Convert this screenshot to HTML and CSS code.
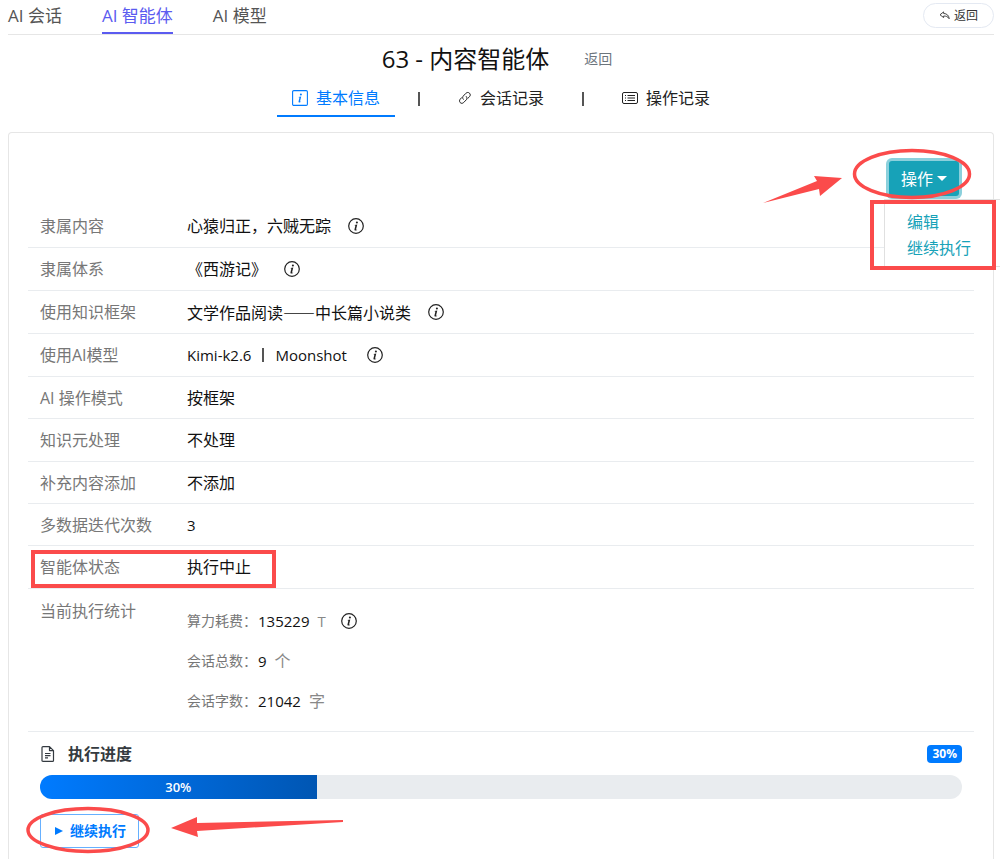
FILE: index.html
```html
<!DOCTYPE html>
<html lang="zh-CN">
<head>
<meta charset="utf-8">
<meta name="viewport" content="width=device-width, initial-scale=1">
<title>63 - 内容智能体</title>
<link rel="stylesheet" href="styles.css">
</head>
<body>
<svg class="sprite" aria-hidden="true">
  <symbol id="info" viewBox="0 0 16 16">
    <circle cx="8" cy="8" r="7.3" fill="none" stroke="currentColor" stroke-width="1.2"/>
    <circle cx="8.9" cy="4.5" r="1.05" fill="currentColor"/>
    <path d="M6.5 6.9 9.3 6.5 8.1 11.2c-.1.6.2.7.9.2l.2.3c-.6.6-1.2.9-1.8.9-.8 0-1.1-.5-.9-1.3l.8-3.3c.1-.5 0-.6-.9-.7z" fill="currentColor"/>
  </symbol>
</svg>
<div class="page">
  <header class="topbar">
    <nav class="tabs">
      <a class="tab" href="#">AI 会话</a>
      <a class="tab tab-active" href="#">AI 智能体</a>
      <a class="tab" href="#">AI 模型</a>
    </nav>
    <button class="back-pill" type="button">
      <svg class="back-icon" viewBox="0 0 12 10" fill="none" stroke="currentColor" stroke-width="1" stroke-linejoin="round"><path d="M5 1 1 4.2 5 7.3V5.6c2.600-.2 4.700.6 6.200 3C11 5.200 8.800 2.900 5 2.700z"/></svg>
      返回
    </button>
  </header>

  <div class="title-row">
    <h1 class="title">63 - 内容智能体</h1>
    <a class="title-back" href="#">返回</a>
  </div>

  <nav class="subtabs">
    <a class="subtab subtab-active" href="#">
      <svg class="icon" viewBox="0 0 16 16"><rect x=".6" y=".6" width="14.800" height="14.800" rx="1.200" fill="none" stroke="currentColor" stroke-width="1.100"/><circle cx="8.900" cy="4.500" r="1" fill="currentColor"/><path d="M6.500 6.900 9.200 6.600 8.100 11.300c-.1.500.2.600.9.200l.1.300c-.6.500-1.200.7-1.700.7-.7 0-1-.4-.8-1.200l.8-3.400c.1-.4 0-.5-.9-.6z" fill="currentColor"/></svg>
      基本信息
    </a>
    <span class="bar" aria-hidden="true"></span>
    <a class="subtab" href="#">
      <svg class="icon-link" viewBox="0 0 14 14" fill="none" stroke="currentColor" stroke-width="1" stroke-linecap="round"><path d="M5.300 8.300C4.300 7.200 4.500 5.900 5.300 5L7.900 2.300C9 1.200 10.500 1.200 11.500 2.200s1 2.500 0 3.500L9.900 7.300M8.300 5.500c1 1 .9 2.400 0 3.300l-2.600 2.700c-1.100 1.100-2.600 1.100-3.500.1s-.9-2.400 0-3.400l1.500-1.600"/></svg>
      会话记录
    </a>
    <span class="bar" aria-hidden="true"></span>
    <a class="subtab" href="#">
      <svg class="icon" viewBox="0 0 16 16" fill="none" stroke="currentColor" stroke-width="1"><rect x=".5" y="2.500" width="15" height="11" rx="1.500"/><path d="M5.500 5.500h7.500M5.500 8h7.500M5.500 10.500h7.500M3 5.500h1M3 8h1M3 10.500h1"/></svg>
      操作记录
    </a>
  </nav>

  <main class="card">
    <div class="actions">
      <div class="dropdown">
        <button class="dropdown-toggle" type="button" aria-expanded="true">操作<span class="caret"></span></button>
        <div class="dropdown-menu">
          <a class="dropdown-item" href="#">编辑</a>
          <a class="dropdown-item" href="#">继续执行</a>
        </div>
        <svg class="mark mark-menu" viewBox="0 0 240 130" aria-hidden="true">
          <ellipse cx="152" cy="28" rx="57.500" ry="23.500" fill="none" stroke="#fb4b4b" stroke-width="3.500"/>
          <path d="M3 57 57 35 54 30 82 32 60 50 59 43z" fill="#fb4b4b"/>
          <rect x="112" y="56" width="122" height="66" fill="none" stroke="#fb4b4b" stroke-width="4"/>
        </svg>
      </div>
    </div>

    <dl class="details">
      <div class="row row-info"><dt>隶属内容</dt><dd>心猿归正，六贼无踪<svg class="icon info"><use href="#info"/></svg></dd></div>
      <div class="row row-info"><dt>隶属体系</dt><dd>《西游记》<svg class="icon info"><use href="#info"/></svg></dd></div>
      <div class="row row-info"><dt>使用知识框架</dt><dd class="cjk">文学作品阅读——中长篇小说类<svg class="icon info"><use href="#info"/></svg></dd></div>
      <div class="row row-info"><dt>使用AI模型</dt><dd class="latin"><span>Kimi-k2.6</span><span class="bar bar-model"></span><span>Moonshot</span><svg class="icon info info-model"><use href="#info"/></svg></dd></div>
      <div class="row"><dt>AI 操作模式</dt><dd>按框架</dd></div>
      <div class="row row-info"><dt>知识元处理</dt><dd>不处理</dd></div>
      <div class="row"><dt>补充内容添加</dt><dd>不添加</dd></div>
      <div class="row"><dt>多数据迭代次数</dt><dd class="latin">3</dd></div>
      <div class="row row-info row-status"><dt>智能体状态</dt><dd>执行中止</dd></div>
      <div class="row row-stats"><dt>当前执行统计</dt>
        <dd class="stats">
          <div class="stat"><span class="stat-label">算力耗费：</span><span class="latin">135229</span><span class="unit latin">T</span><svg class="icon info-stat"><use href="#info"/></svg></div>
          <div class="stat"><span class="stat-label">会话总数：</span><span class="latin">9</span><span class="unit">个</span></div>
          <div class="stat"><span class="stat-label">会话字数：</span><span class="latin">21042</span><span class="unit">字</span></div>
        </dd>
      </div>
    </dl>

    <section class="progress">
      <div class="progress-head">
        <svg class="icon" viewBox="0 0 16 16" fill="none" stroke="#343a40" stroke-width="1.200" stroke-linejoin="round"><path d="M2 1.500Q2 .6 3 .6H9.500L13.500 4.600V14.500Q13.500 15.400 12.500 15.400H3Q2 15.400 2 14.500zM9.500.6V4.600h4M5 7.500h5.500M5 9.700h5.500M5 11.900h3"/></svg>
        <h2 class="progress-title">执行进度</h2>
        <span class="badge">30%</span>
      </div>
      <div class="track" role="progressbar" aria-label="执行进度" aria-valuenow="30" aria-valuemin="0" aria-valuemax="100">
        <div class="fill" style="width:30%">30%</div>
      </div>
      <div class="resume-wrap">
        <button class="resume" type="button"><svg class="play" viewBox="0 0 8 8"><path d="M0 0 8 4 0 8z" fill="currentColor"/></svg>继续执行</button>
        <svg class="mark mark-resume" viewBox="0 0 330 60" aria-hidden="true">
          <ellipse cx="68" cy="29" rx="60" ry="21.500" fill="none" stroke="#fb4b4b" stroke-width="3.500"/>
          <path d="M151 27 177 16V22L323 19V21L177 30 178 36z" fill="#fb4b4b"/>
        </svg>
      </div>
    </section>
  </main>
</div>
</body>
</html>
```
FILE: styles.css
```css
*, *::before, *::after { box-sizing: border-box; }
body {
  margin: 0;
  background: #fff;
  color: #111;
  font: 16px/24px "Open Sans", "Noto Sans CJK SC", sans-serif;
}
a { color: inherit; text-decoration: none; }
button { font: inherit; margin: 0; }
.sprite { position: absolute; width: 0; height: 0; }
.page {
  display: flex;
  flex-direction: column;
  min-height: 100vh;
  padding: 0 6px 0 8px;
  overflow-x: clip;
}

.topbar {
  display: flex;
  justify-content: space-between;
  align-items: flex-start;
  height: 35px;
  border-bottom: 1px solid #e6e6e6;
}
.tabs { display: flex; gap: 40px; }
.tab {
  height: 34px;
  line-height: 32px;
  font-size: 17px;
  color: #555;
}
.tab-active { color: #5b5bf0; border-bottom: 2px solid #5b5bf0; }
.back-pill {
  display: flex;
  align-items: center;
  gap: 4px;
  height: 25px;
  margin-top: 3px;
  padding: 0 15px;
  border: 1px solid #e4e9f2;
  border-radius: 13px;
  background: #fff;
  color: #333;
  font-size: 12px;
}
.back-icon { width: 11px; height: 9px; }

.title-row {
  display: flex;
  justify-content: center;
  align-items: center;
  gap: 35px;
  padding: 8px 8px 0 0;
}
.title { margin: 0; font-size: 24px; line-height: 32px; font-weight: 400; }
.title-back { font-size: 14px; color: #6c757d; }

.subtabs {
  display: flex;
  justify-content: center;
  align-items: center;
  gap: 23px;
  margin-top: 5px;
}
.subtab {
  display: flex;
  align-items: center;
  gap: 8px;
  height: 37px;
  padding: 0 15px;
  border-bottom: 2px solid transparent;
  color: #222;
}
.subtab-active { color: #007bff; border-color: #007bff; }
.icon { width: 16px; height: 16px; flex: none; }
.icon-link { width: 14px; height: 14px; flex: none; }
.bar { width: 2px; height: 14px; background: #555; }

.card {
  flex: 1;
  margin-top: 15px;
  padding: 0 19px 10px;
  border: 1px solid #e6e6e6;
  border-bottom: 0;
  border-radius: 4px 4px 0 0;
}
.actions { display: flex; justify-content: flex-end; padding: 28px 15px 0 0; }
.dropdown { position: relative; }
.dropdown-toggle {
  display: flex;
  align-items: center;
  gap: 4px;
  height: 35px;
  padding: 0 12px;
  border: 0;
  border-radius: 3px;
  background: #17a2b8;
  box-shadow: 0 0 0 3px #8bd0dc;
  color: #fff;
}
.caret { border: 5px solid transparent; border-top: 5px solid #fff; border-bottom: 0; }
.dropdown-menu {
  position: absolute;
  top: 38px;
  left: -5px;
  width: 160px;
  padding: 9px 22px 5px;
  border: 1px solid #e0e0e0;
  background: #fff;
  color: #17a2b8;
}
.dropdown-item { display: block; line-height: 26px; }
.mark { position: absolute; pointer-events: none; }
.mark-menu { top: -15px; left: -129px; width: 240px; height: 130px; }

.details { margin: 9px 0 0; }
.row {
  display: grid;
  grid-template-columns: 147px 1fr;
  padding: 9px 12px 8px;
  border-bottom: 1px solid #e9ecef;
}
.row-info { padding-bottom: 9px; }
.row dt { color: #777; }
.row dd { display: flex; align-items: center; margin: 0; }
.row .cjk { font-family: "Noto Sans CJK SC", sans-serif; }
.latin { font-size: 15px; }
.info { margin-left: 17px; color: #222; }
.info-model { margin-left: 20px; }
.bar-model { margin: 0 11px; }
.row-stats { padding: 10px 12px; }
.row dd.stats { display: block; padding-top: 2px; }
.stat { display: flex; align-items: center; height: 40px; }
.stat-label { width: 71px; font-size: 14px; color: #777; }
.unit { margin-left: 8px; color: #888; }
.info-stat { margin-left: 15px; color: #222; }

.progress { padding: 10px 12px 0; }
.progress-head { display: flex; align-items: center; gap: 12px; }
.progress-title { flex: 1; margin: 0; font-size: 16px; line-height: 24px; font-weight: 600; color: #343a40; }
.badge {
  padding: 0 5px;
  border-radius: 4px;
  background: #007bff;
  color: #fff;
  font-size: 12px;
  line-height: 18px;
  font-weight: 700;
}
.track {
  height: 24px;
  margin-top: 9px;
  border-radius: 12px;
  background: #e9ecef;
  overflow: hidden;
}
.fill {
  height: 100%;
  background: linear-gradient(90deg, #007bff, #0056b3);
  color: #fff;
  font-size: 13px;
  font-weight: 600;
  text-align: center;
}
.resume-wrap { position: relative; margin-top: 15px; }
.resume {
  display: flex;
  align-items: center;
  gap: 7px;
  height: 34px;
  padding: 0 12px 0 14px;
  border: 1px solid #66b0ff;
  border-radius: 3px;
  background: #fff;
  color: #007bff;
  font-size: 14px;
  font-weight: 600;
}
.play { width: 8px; height: 8px; }
.mark-resume { top: -13px; left: -20px; width: 330px; height: 60px; }
.row-status { position: relative; }
.row-status::after {
  content: "";
  position: absolute;
  top: 4px;
  left: 3px;
  width: 245px;
  height: 38px;
  border: 4px solid #fb4b4b;
}
```
